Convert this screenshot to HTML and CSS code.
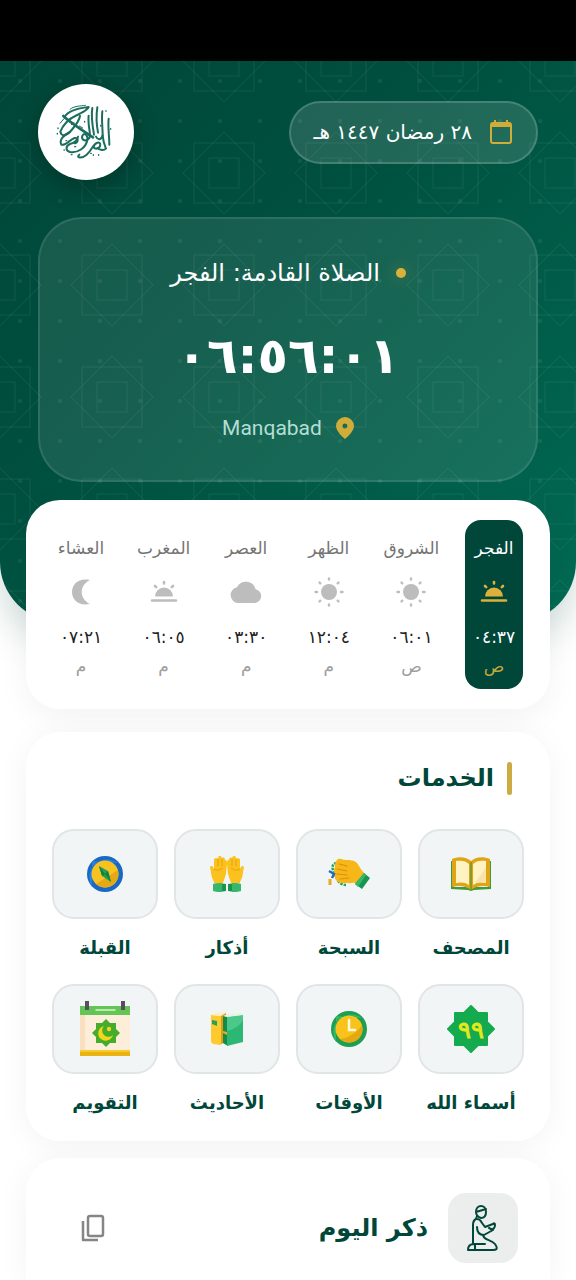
FILE: index.html
```
<!DOCTYPE html>
<html lang="ar" dir="rtl">
<head>
    <meta charset="UTF-8">
    <title>مواقيت الصلاة</title>
    <meta name="viewport" content="width=device-width, initial-scale=1.0">
    <link rel="stylesheet" href="styles.css">
</head>
<body>

<div class="status-bar"></div>

<header class="hero">
    <svg class="hero-pattern" aria-hidden="true">
        <defs>
            <pattern id="stars" x="-56" y="-56" width="112" height="112" patternUnits="userSpaceOnUse">
                <g fill="none" stroke="#fff" stroke-opacity=".07">
                    <rect x="41" y="41" width="30" height="30"/>
                    <rect x="26" y="26" width="60" height="60"/>
                    <path d="M56 15l41 41-41 41-41-41z"/>
                </g>
            </pattern>
            <pattern id="dots" width="40" height="40" patternUnits="userSpaceOnUse">
                <circle cx="20" cy="20" r="2" fill="#fff" fill-opacity=".07"/>
            </pattern>
        </defs>
        <rect width="100%" height="100%" fill="url(#stars)"/>
        <rect width="100%" height="100%" fill="url(#dots)"/>
    </svg>

    <div class="top-row">
        <div class="date">
            <svg width="24" height="26" viewBox="0 0 24 26" fill="none" stroke="#d0ac38" stroke-width="2">
                <rect x="2" y="4" width="20" height="20" rx="2"/>
                <path d="M6 1v4M18 1v4"/>
                <path d="M2 4h20v4H2z" fill="#d0ac38" stroke="none"/>
            </svg>
            <span>٢٨ رمضان ١٤٤٧ هـ</span>
        </div>
        <div class="logo">
            <svg width="96" height="96" viewBox="0 0 288 288" fill="none" stroke="#1b6e5e" stroke-width="6" stroke-linecap="round" stroke-linejoin="round">
                <path d="M80 98C90 82 116 73 152 69C150 78 132 86 112 96C92 104 74 124 67 143C70 158 84 158 101 138C113 124 124 110 126 96"/>
                <path d="M76 96C100 118 134 140 165 160" stroke-width="8"/>
                <path d="M163 72C159 96 163 124 168 152M178 70C174 96 176 124 180 146M193 82C190 106 194 132 194 154C190 168 180 170 174 158M212 104C209 130 214 154 214 182"/>
                <path d="M152 95C148 124 160 146 154 162C144 174 132 170 132 158C136 144 150 150 148 168C144 192 118 208 96 204C82 200 82 186 96 180C112 176 118 170 120 158"/>
                <path d="M96 144C78 152 62 168 70 182C84 186 96 166 110 162C122 160 122 174 110 178"/>
                <path d="M124 212C112 222 132 224 146 212C164 196 164 180 178 176C192 174 188 192 176 194C164 194 166 184 174 178M194 154C196 178 202 188 204 194C196 202 182 196 178 192"/>
                <path d="M96 76C106 66 128 66 142 64M66 118L78 104M100 122l8-6M124 126l10 6" stroke-width="3"/>
                <path d="M60 132v2M58 148v2M84 170h2M110 188h3M158 208h2M182 212v2M166 212v2M204 80v2M218 134v2M100 212h2M78 198h1M134 84h2M140 112v2M188 124v2" stroke-width="4"/>
            </svg>
        </div>
    </div>

    <section class="next-prayer">
        <h1><span class="dot"></span>الصلاة القادمة: الفجر</h1>
        <time class="countdown">٠٦:٥٦:٠١</time>
        <div class="place">
            <svg width="18" height="22" viewBox="0 0 18 22"><path fill="#d0ac38" fill-rule="evenodd" d="M9 0a9 9 0 0 1 9 9c0 6-9 13-9 13S0 15 0 9a9 9 0 0 1 9-9zm0 6.500a2.500 2.500 0 1 0 0 5 2.500 2.500 0 0 0 0-5z"/></svg>
            <span lang="en">Manqabad</span>
        </div>
    </section>
</header>

<!-- Icons shared by the prayer times -->
<svg class="defs" aria-hidden="true">
    <symbol id="sunrise" viewBox="0 0 28 24">
        <path fill="currentColor" d="M5 16.500a9 9 0 0 1 18 0z"/>
        <path d="M2 20.500h24M14 2v1.500M5 6l1.200 1.200M23 6l-1.200 1.200" fill="none" stroke="currentColor" stroke-width="2.600" stroke-linecap="round"/>
    </symbol>
    <symbol id="sun" viewBox="0 0 30 30">
        <circle cx="15" cy="15" r="8" fill="currentColor"/>
        <path d="M15 1.500v1M15 27.500v1M1.500 15h1.500M27 15h1.500M5.500 5.500l.8.800M23.700 23.700l.8.800M5.500 24.500l.8-.8M23.700 6.300l.8-.8" fill="none" stroke="currentColor" stroke-width="2.400" stroke-linecap="round"/>
    </symbol>
    <symbol id="cloud" viewBox="0 0 32 22">
        <path fill="currentColor" d="M8 22a8 8 0 0 1-1-15.800 10 10 0 0 1 18.600 2A7 7 0 0 1 25 22z"/>
    </symbol>
    <symbol id="moon" viewBox="0 0 18 27">
        <path fill="currentColor" d="M18 1.500C5 -1 0 7 0 13.500S5 28 18 25.500C7 20 7 7 18 1.500z"/>
    </symbol>
</svg>

<section class="times">
    <div class="prayer active">
        <span class="name">الفجر</span>
        <svg width="28" height="24"><use href="#sunrise"/></svg>
        <time>٠٤:٣٧</time>
        <small>ص</small>
    </div>
    <div class="prayer">
        <span class="name">الشروق</span>
        <svg width="30" height="30"><use href="#sun"/></svg>
        <time>٠٦:٠١</time>
        <small>ص</small>
    </div>
    <div class="prayer">
        <span class="name">الظهر</span>
        <svg width="30" height="30"><use href="#sun"/></svg>
        <time>١٢:٠٤</time>
        <small>م</small>
    </div>
    <div class="prayer">
        <span class="name">العصر</span>
        <svg width="32" height="22"><use href="#cloud"/></svg>
        <time>٠٣:٣٠</time>
        <small>م</small>
    </div>
    <div class="prayer">
        <span class="name">المغرب</span>
        <svg width="28" height="24"><use href="#sunrise"/></svg>
        <time>٠٦:٠٥</time>
        <small>م</small>
    </div>
    <div class="prayer">
        <span class="name">العشاء</span>
        <svg width="18" height="27"><use href="#moon"/></svg>
        <time>٠٧:٢١</time>
        <small>م</small>
    </div>
</section>

<section class="card services">
    <h2>الخدمات</h2>
    <div class="grid">
        <a class="service" href="#">
            <span class="tile">
                <svg width="40" height="34" viewBox="0 0 40 34">
                    <path fill="#3f9a3c" d="M0 4h3v26h34V4h3v28l-17 1-3 1-3-1-17-1z"/>
                    <path fill="#e0a516" d="M1 2C8-1 16 0 20 4c4-4 12-5 19-2v28c-7-2-14-1-19 3-5-4-12-5-19-3z"/>
                    <path fill="#fff3c4" d="M5 4c6-1 10 0 13 3v21c-4-3-8-3-13-2zM35 4c-6-1-10 0-13 3v21c4-3 8-3 13-2z"/>
                    <path fill="#f8e3ab" d="M35 10v16c-5-1-9-1-12 1 3-5 7-8 12-17z"/>
                    <path d="M20 5v28" stroke="#6a9a2c" stroke-width="1.500"/>
                </svg>
            </span>
            المصحف
        </a>
        <a class="service" href="#">
            <span class="tile">
                <svg width="42" height="32" viewBox="0 0 42 32">
                    <path d="M12 4C4 5 3 9 6 14S9 27 19 27" fill="none" stroke="#22a45a" stroke-width="2.500" stroke-dasharray="2.500 1"/>
                    <path fill="#f7b718" d="M10 1c3-1 5 1 8 1 4 0 8 0 11 3 3 4 4 7 8 11l-8 11c-3-4-6-1-9-2-5 0-9 1-12-3-2-4-3-9-1-13 0-3 0-5 3-8z"/>
                    <path d="M11 6l8 2M9 11l10 2M9 16l10 1M12 21l9-1" fill="none" stroke="#dc900c" stroke-width="1.200" stroke-linecap="round"/>
                    <path fill="#18954f" d="M36 15l6 5-8 11-7-5z"/>
                    <path fill="#36b76b" d="M36 15l2 2-8 12-3-3z"/>
                    <path d="M1 13l5 3-2 4" fill="none" stroke="#246cc0" stroke-width="2.500"/>
                    <path d="M2 21v6" stroke="#e5a927" stroke-width="3"/>
                </svg>
            </span>
            السبحة
        </a>
        <a class="service" href="#">
            <span class="tile">
                <svg width="34" height="36" viewBox="0 0 34 36">
                    <g id="palm">
                        <path fill="#fbc21d" d="M4 26C2 22 1 19 1 16L0 11c1-2 3-1 4 2V4c0-2 3-3 4-1 0-4 3-4 4-1 2-1 3 0 3 2 2 0 2 2 2 4l-1 10-3 9H4z"/>
                        <path d="M4 13c3 2 6 1 9-1M8 3v7M12 3v7" fill="none" stroke="#e7a011" stroke-width="1"/>
                        <path fill="#19964e" d="M3 28c4-1 8-1 13 0v7c-5 1-8 1-13 0z"/>
                        <path fill="#37b76c" d="M3 28l9-1v9l-9-1z"/>
                    </g>
                    <use href="#palm" transform="matrix(-1 0 0 1 34 0)"/>
                </svg>
            </span>
            أذكار
        </a>
        <a class="service" href="#">
            <span class="tile">
                <svg width="36" height="36" viewBox="0 0 36 36">
                    <circle cx="18" cy="18" r="18" fill="#1769c5"/>
                    <path fill="#2781dc" d="M5 5l26 2A18 18 0 0 0 5 31z"/>
                    <circle cx="18" cy="18" r="13.500" fill="#f8c220"/>
                    <path fill="#e6a916" d="M9 28a13.500 13.500 0 0 0 22-14z"/>
                    <path fill="#22a153" d="M12 10l9 5 3 11-9-6z"/>
                    <path fill="#12803d" d="M12 10l6 8-3 2zM24 26l-6-8 3-3z"/>
                </svg>
            </span>
            القبلة
        </a>
        <a class="service" href="#">
            <span class="tile">
                <svg width="48" height="48" viewBox="0 0 48 48">
                    <path fill="#14ab4f" stroke="#14ab4f" stroke-width="2" stroke-linejoin="round" d="M24 1l7 7h9v9l7 7-7 7v9h-9l-7 7-7-7H8v-9l-7-7 7-7V8h9z"/>
                    <text x="24" y="33" text-anchor="middle" font-family="DejaVu Sans" font-size="24" fill="#e5e81b" stroke="#e5e81b">٩٩</text>
                </svg>
            </span>
            أسماء الله
        </a>
        <a class="service" href="#">
            <span class="tile">
                <svg width="36" height="36" viewBox="0 0 36 36">
                    <circle cx="18" cy="18" r="18" fill="#1d9e52"/>
                    <path fill="#30b768" d="M5 5l26 2A18 18 0 0 0 5 31z"/>
                    <circle cx="18" cy="18" r="13.500" fill="#f9c31c"/>
                    <path fill="#e6a812" d="M9 28c8-1 18-7 22-14a13.500 13.500 0 0 1-22 14z"/>
                    <path d="M18 9v10h6" fill="none" stroke="#fffbe0" stroke-width="2.500" stroke-linecap="round"/>
                </svg>
            </span>
            الأوقات
        </a>
        <a class="service" href="#">
            <span class="tile">
                <svg width="34" height="34" viewBox="0 0 34 34">
                    <path fill="#dc9c14" d="M9 4l7-3v29l-7 3z"/>
                    <path fill="#ffca2d" d="M1 3l10 1v29l-8-1-2-2z"/>
                    <path fill="#fff0bd" d="M1 3l4-2 12-1-6 4z"/>
                    <path fill="#24a25b" d="M2 8l5 1v5l-5-2z"/>
                    <path fill="#148b4a" d="M13 4l5 1v29l-5-3z"/>
                    <path fill="#2db774" d="M17 5l16-2v27l-16 4z"/>
                    <path fill="#4cc98a" d="M17 5l16-2v5c-3 6-9 9-16 11z"/>
                    <path fill="#e6f5df" d="M13 4l5-2 14-1 1 2-16 2z"/>
                    <path fill="#e9ad21" d="M13 19l4 1v3l-4-2z"/>
                </svg>
            </span>
            الأحاديث
        </a>
        <a class="service" href="#">
            <span class="tile">
                <svg width="50" height="56" viewBox="0 0 50 56">
                    <path fill="#fdeed9" d="M0 5h50v50H0z"/>
                    <path fill="#fae0c0" d="M0 14h5v36H0z"/>
                    <path fill="#65c456" d="M0 5h50v9H0z"/>
                    <path fill="#e9b313" d="M0 49h50v6H0z"/>
                    <path fill="#f8cb2c" d="M0 49h50v2H0z"/>
                    <path d="M16 9h19" stroke="#d8f6d0" stroke-width="1.500" stroke-linecap="round"/>
                    <path fill="#55505c" d="M5 0h4v9H5zM41 0h4v9h-4z"/>
                    <path fill="#45ac2c" d="M26 18l4 4h6v6l4 4-4 4v6h-6l-4 4-4-4h-6v-6l-4-4 4-4v-6h6z"/>
                    <path fill="#f2d61c" d="M24 25a7.500 7.500 0 1 0 9 9 6 6 0 0 1-9-9z"/>
                    <circle cx="29" cy="28" r="2.200" fill="#f2d61c"/>
                </svg>
            </span>
            التقويم
        </a>
    </div>
</section>

<section class="card dhikr">
    <span class="dhikr-icon">
        <svg width="32" height="46" viewBox="0 0 32 46" fill="none" stroke="#00473a" stroke-width="2" stroke-linecap="round" stroke-linejoin="round">
            <path d="M9 7c0-8 10-8 10 0 0 4-2 6-5 6-3-1-5-3-5-6zM9 7l10-3"/>
            <path d="M10 11l-1 3c-2 1-3 3-3 6v18M10 14c3 0 4 2 5 4l3 4 8-3M10 22c0 6 3 8 7 8l9-5"/>
            <path d="M26 19c1-1 2-1 2 1 0 3-2 5-4 4l-2-1"/>
            <path d="M16 30c1 6 8 4 12 9 4 6 0 6-2 6H1c0-5 3-6 6-6h11M8 39v6"/>
        </svg>
    </span>
    <h2>ذكر اليوم</h2>
    <button class="copy" type="button" aria-label="نسخ">
        <svg width="24" height="28" viewBox="0 0 24 28" fill="none" stroke="#858585" stroke-width="2.500" stroke-linejoin="round">
            <rect x="7" y="2" width="15" height="20" rx="2"/>
            <path d="M2 7v19h15"/>
        </svg>
    </button>
</section>

</body>
</html>
```
FILE: styles.css
```
* {
    box-sizing: border-box;
}
body {
    margin: 0;
    min-height: 100vh;
    display: flex;
    flex-direction: column;
    background: #fff;
    color: #00473a;
    font-family: "DejaVu Sans", sans-serif;
}
h1, h2 {
    margin: 0;
}
.status-bar {
    height: 61px;
    background: #000;
}
.defs {
    position: absolute;
    width: 0;
    height: 0;
}

/* Header */
.hero {
    position: relative;
    padding: 23px 38px 140px;
    border-radius: 0 0 60px 60px;
    background: linear-gradient(135deg, #004638 0%, #00503f 40%, #006a53 100%);
    box-shadow: 0 16px 40px rgba(0, 77, 60, 0.2);
    color: #fff;
}
.hero-pattern {
    position: absolute;
    inset: 0;
    width: 100%;
    height: 100%;
    border-radius: 0 0 60px 60px;
}
.top-row {
    position: relative;
    display: flex;
    align-items: center;
    justify-content: space-between;
}
.logo {
    width: 96px;
    height: 96px;
    border-radius: 50%;
    background: #fff;
    box-shadow: 0 8px 24px rgba(0, 0, 0, 0.25);
}
.date {
    display: flex;
    align-items: center;
    gap: 17px;
    height: 63px;
    padding: 0 23px;
    border: 2px solid rgba(255, 255, 255, 0.17);
    border-radius: 32px;
    background: rgba(255, 255, 255, 0.13);
    font-size: 20px;
    white-space: nowrap;
}
.next-prayer {
    position: relative;
    display: flex;
    flex-direction: column;
    align-items: center;
    margin-top: 37px;
    padding: 34px 20px 36px;
    border: 2px solid rgba(255, 255, 255, 0.1);
    border-radius: 44px;
    background: rgba(255, 255, 255, 0.09);
}
.next-prayer h1 {
    display: flex;
    align-items: center;
    gap: 16px;
    font-size: 24px;
    font-weight: normal;
    line-height: 40px;
}
.dot {
    width: 10px;
    height: 10px;
    border-radius: 50%;
    background: #dbb13b;
    box-shadow: 0 0 16px rgba(219, 177, 59, 0.4);
}
.countdown {
    margin-top: 25px;
    font-size: 50px;
    font-weight: bold;
    line-height: 76px;
}
.place {
    display: flex;
    align-items: center;
    gap: 14px;
    margin-top: 18px;
    color: #b2dfd3;
    font-family: Roboto, sans-serif;
    font-size: 21px;
    line-height: 32px;
}

/* Prayer times */
.times {
    position: relative;
    display: flex;
    justify-content: space-between;
    margin: -122px 26px 0;
    padding: 20px 27px 20px 26px;
    border-radius: 34px;
    background: #fff;
    box-shadow: 0 8px 32px rgba(0, 0, 0, 0.05);
}
.prayer {
    display: flex;
    flex-direction: column;
    align-items: center;
    width: 58px;
    padding: 12px 0;
    border-radius: 16px;
    color: #bdbdbd;
    white-space: nowrap;
}
.prayer svg {
    height: 30px;
    margin: 13px 0 15px;
}
.name {
    color: #757575;
    font-size: 17px;
    line-height: 32px;
}
.prayer time {
    color: #212121;
    font-size: 17px;
    line-height: 30px;
}
.prayer small {
    margin-top: 3px;
    color: #9e9e9e;
    font-size: 17px;
    line-height: 22px;
}
.active {
    background: #00473a;
    color: #dbb13b;
}
.active .name, .active time {
    color: #fff;
}
.active small {
    color: #c4a63a;
}

/* Cards */
.card {
    position: relative;
    margin: 23px 26px 0;
    border-radius: 34px;
    background: #fff;
    box-shadow: 0 4px 32px rgba(0, 0, 0, 0.05);
}
.card h2 {
    font-size: 24px;
    line-height: 40px;
}
.services {
    padding: 26px 26px 23px;
}
.services h2 {
    display: flex;
    align-items: center;
    gap: 13px;
    padding-right: 12px;
}
.services h2::before {
    content: "";
    width: 5px;
    height: 33px;
    border-radius: 3px;
    background: #cbab42;
}
.grid {
    display: grid;
    grid-template-columns: repeat(4, 1fr);
    gap: 21px 16px;
    margin-top: 31px;
}
.service {
    display: flex;
    flex-direction: column;
    gap: 14px;
    align-items: center;
    color: #00473a;
    font-size: 18px;
    font-weight: bold;
    line-height: 30px;
    text-decoration: none;
    white-space: nowrap;
}
.tile {
    display: flex;
    align-items: center;
    justify-content: center;
    width: 100%;
    height: 90px;
    border: 2px solid #e0e5e5;
    border-radius: 22px;
    background: #f1f5f6;
    font-weight: normal;
}
.dhikr {
    flex: 1;
    display: flex;
    align-items: flex-start;
    gap: 20px;
    margin-top: 17px;
    padding: 35px 32px 17px;
    border-radius: 34px 34px 0 0;
}
.card.dhikr h2 {
    line-height: 70px;
}
.dhikr-icon {
    display: flex;
    align-items: center;
    justify-content: center;
    width: 70px;
    height: 70px;
    border-radius: 18px;
    background: #ebeeed;
}
.copy {
    display: flex;
    align-items: center;
    justify-content: center;
    width: 70px;
    height: 70px;
    margin-right: auto;
    padding: 0;
    border: none;
    background: none;
    cursor: pointer;
}
```
